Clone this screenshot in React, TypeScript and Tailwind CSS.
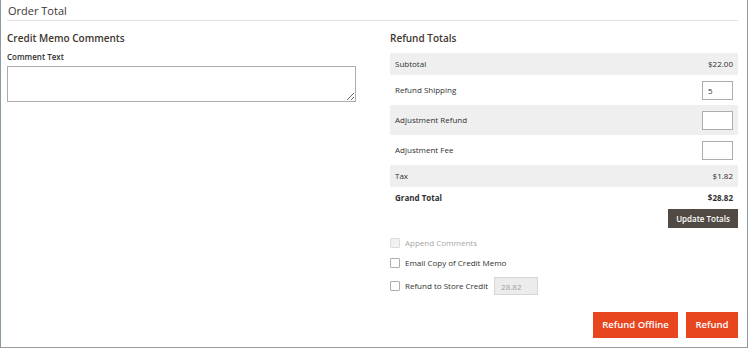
import { useState } from "react";

type Row = {
  label: string;
  value?: string;
  input?: string;
  shaded?: boolean;
  tall?: boolean;
  strong?: boolean;
};

const rows: Row[] = [
  { label: "Subtotal", value: "$22.00", shaded: true },
  { label: "Refund Shipping", input: "5", tall: true },
  { label: "Adjustment Refund", input: "", shaded: true, tall: true },
  { label: "Adjustment Fee", input: "", tall: true },
  { label: "Tax", value: "$1.82", shaded: true },
  { label: "Grand Total", value: "$28.82", strong: true },
];

function TotalsRow({ row }: { row: Row }) {
  const [val, setVal] = useState(row.input ?? "");
  return (
    <div
      className={`flex items-center justify-between px-[5px] ${row.tall ? "h-[30px]" : "h-[22px]"} ${
        row.shaded ? "bg-[#efefef]" : ""
      } ${row.strong ? "font-bold" : ""}`}
    >
      <span>{row.label}</span>
      {row.input !== undefined ? (
        <input
          className="w-[31px] h-[19px] border border-[#adadad] bg-white px-[5px] text-[8px] text-[#303030] outline-none"
          value={val}
          onChange={(e) => setVal(e.target.value)}
        />
      ) : (
        <span>{row.value}</span>
      )}
    </div>
  );
}

function Check({ label, disabled }: { label: string; disabled?: boolean }) {
  return (
    <label className={`flex items-center gap-[5px] ${disabled ? "text-[#a6a6a6]" : ""}`}>
      <input
        type="checkbox"
        disabled={disabled}
        className={`appearance-none w-[10px] h-[10px] rounded-[1px] border ${
          disabled ? "border-[#dcdcdc] bg-[#f2f2f2]" : "border-[#adadad] bg-white"
        }`}
      />
      <span>{label}</span>
    </label>
  );
}

export default function App() {
  return (
    <div
      className="w-[748px] h-[348px] border-x border-b border-x-[#8c9aa3] border-b-[#9a9a9a] pl-[6px] pr-[9px] text-[8px] text-[#303030]"
      style={{ fontFamily: '"Open Sans", "Liberation Sans", sans-serif' }}
    >
      {/* section header */}
      <div className="pt-[3px] pb-[2px] pl-px text-[11px] leading-[15px] text-[#41362f] border-b border-[#e3e3e3]">
        Order Total
      </div>

      <div className="flex gap-[34px] mt-[10px]">
        {/* comments */}
        <div className="w-[349px] flex flex-col">
          <h3 className="text-[10px] leading-[14px] font-semibold text-[#41362f]">Credit Memo Comments</h3>
          <label className="mt-[6px] leading-[12px] font-semibold">Comment Text</label>
          <textarea className="mt-[3px] h-[36px] w-full border border-[#adadad] bg-white" />
        </div>

        {/* refund totals */}
        <div className="flex-1 flex flex-col">
          <h3 className="text-[10px] leading-[14px] font-semibold text-[#41362f]">Refund Totals</h3>
          <div className="mt-[8px]">
            {rows.map((r) => (
              <TotalsRow key={r.label} row={r} />
            ))}
          </div>
          <div className="flex justify-end">
            <button className="h-[19px] w-[70px] bg-[#514943] text-white text-[8px] font-semibold">
              Update Totals
            </button>
          </div>

          <div className="mt-[8px] flex flex-col">
            <div className="h-[14px] flex items-center">
              <Check label="Append Comments" disabled />
            </div>
            <div className="mt-[6px] h-[14px] flex items-center">
              <Check label="Email Copy of Credit Memo" />
            </div>
            <div className="mt-[7px] h-[18px] flex items-center">
              <Check label="Refund to Store Credit" />
              <input
                disabled
                value="28.82"
                readOnly
                className="ml-[6px] w-[44px] h-[18px] border border-[#d6d6d6] bg-[#ececec] px-[6px] text-[8px] text-[#a0a0a0]"
              />
            </div>
          </div>

          <div className="mt-[17px] flex justify-end gap-[8px]">
            <button className="h-[26px] w-[85px] bg-[#e8461f] text-white text-[9.5px] font-semibold">
              Refund Offline
            </button>
            <button className="h-[26px] w-[52px] bg-[#e8461f] text-white text-[9.5px] font-semibold">
              Refund
            </button>
          </div>
        </div>
      </div>
    </div>
  );
}
